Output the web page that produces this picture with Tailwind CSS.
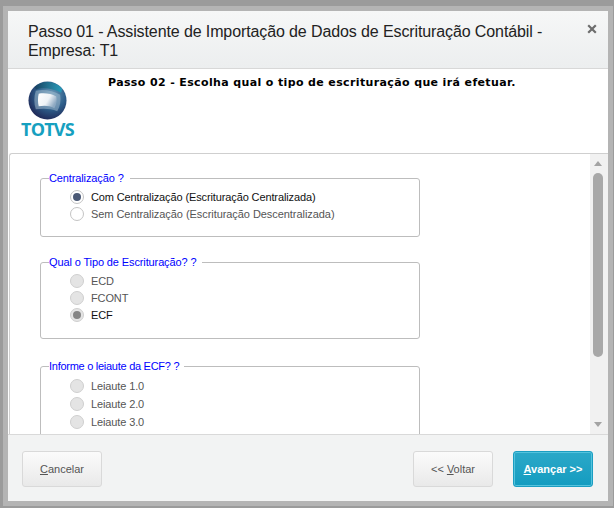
<!DOCTYPE html>
<html lang="pt">
<head>
<meta charset="utf-8">
<script src="https://cdn.jsdelivr.net/npm/@tailwindcss/browser@4"></script>
</head>
<body class="m-0">
<div class="w-[614px] h-[508px] overflow-hidden bg-[#9b9b9b] pl-[3px] pr-px pt-[6px] pb-[2px] font-['Liberation_Sans',Arial,sans-serif]">
  <div class="h-full border-[5px] border-[#b4b4b4] flex flex-col bg-white">
    <!-- header -->
    <header class="h-[58px] shrink-0 flex items-start bg-gradient-to-b from-[#f6f7f7] to-[#eceeef] border-b border-[#d8d8d8] pl-5 pr-[10px] pt-[11px]">
      <h1 class="flex-1 text-[16px] leading-[19px] tracking-[-0.11px] text-[#222]">Passo 01 - Assistente de Importação de Dados de Escrituração Contábil - Empresa: T1</h1>
      <span class="w-[12px] h-[12px] mt-px">
        <svg viewBox="0 0 12 12" class="w-[12px] h-[12px]"><path d="M2.2 2.2 L9.8 9.8 M9.8 2.2 L2.2 9.8" stroke="#6d6d6d" stroke-width="2.2" fill="none"/></svg>
      </span>
    </header>
    <!-- step banner -->
    <div class="h-[84px] shrink-0 flex bg-white">
      <div class="w-[100px] shrink-0 flex flex-col items-center pt-[12px] pr-[21px]">
        <svg viewBox="0 0 40 40" class="w-[39px] h-[39px]">
          <defs>
            <radialGradient id="ball" cx="0.6" cy="0.35" r="0.75">
              <stop offset="0" stop-color="#6f9ebb"/>
              <stop offset="0.5" stop-color="#2e5f8b"/>
              <stop offset="1" stop-color="#1c1c4c"/>
            </radialGradient>
            <linearGradient id="ball-top" x1="0" y1="0" x2="1" y2="0">
              <stop offset="0" stop-color="#153f5c"/>
              <stop offset="1" stop-color="#23a3c0"/>
            </linearGradient>
            <linearGradient id="pane" x1="0" y1="0" x2="1" y2="0.5">
              <stop offset="0" stop-color="#ffffff"/>
              <stop offset="0.6" stop-color="#eef2f6"/>
              <stop offset="1" stop-color="#8ea9c2"/>
            </linearGradient>
          </defs>
          <circle cx="20" cy="20" r="19.5" fill="url(#ball)"/>
          <path d="M7 6 C14 -1 28 -1 35 8 L34 12 C26 8 15 6 8 9 Z" fill="url(#ball-top)" opacity="0.85"/>
          <path d="M8 10 C16 8 26 10 33 14 C34 20 33 26 30 31 C23 28 15 28 8 29 C6 23 6 16 8 10 Z" fill="#a9bfd2" opacity="0.5"/>
          <path d="M11 13 C17 12 24 13 29 16 C30 20 29 24 27 28 C22 25 16 25 11 26 C10 22 10 17 11 13 Z" fill="url(#pane)"/>
        </svg>
        <span class="text-[18px] leading-[18px] font-bold text-[#16a0c0] tracking-[-0.8px] font-['Open_Sans','Liberation_Sans',sans-serif]">TOTVS</span>
      </div>
      <p class="pt-[7px] text-[11px] leading-[14px] font-bold tracking-[0.37px] text-black font-['DejaVu_Sans',Verdana,sans-serif]">Passo 02 - Escolha qual o tipo de escrituração que irá efetuar.</p>
    </div>
    <!-- scroll area -->
    <div class="h-[281px] shrink-0 ml-px flex border-t border-l border-[#cfcfcf] rounded-tl-[3px] overflow-hidden bg-white">
      <div class="flex-1 overflow-hidden pl-[30px] pt-[18px] text-[11px] tracking-[-0.12px] text-[#333]">
        <fieldset class="w-[380px] h-[65px] border border-[#bdbdbd] rounded-[3px] mb-[19px]">
          <legend class="ml-[8px] pr-[6px] text-[11px] leading-[13px] text-[#0000ff]">Centralização ?</legend>
          <div class="flex flex-col gap-[3px] mt-[5px] pl-[29px]">
            <label class="h-[14px] flex items-center gap-[7px] text-[#111]"><span class="w-[14px] h-[14px] rounded-full border border-[#c4c4c4] bg-white flex items-center justify-center"><span class="w-[8px] h-[8px] rounded-full bg-[#4a5874]"></span></span>Com Centralização (Escrituração Centralizada)</label>
            <label class="h-[14px] flex items-center gap-[7px] tracking-[-0.06px] text-[#555]"><span class="w-[14px] h-[14px] rounded-full border border-[#c4c4c4] bg-white"></span>Sem Centralização (Escrituração Descentralizada)</label>
          </div>
        </fieldset>
        <fieldset class="w-[380px] h-[83px] border border-[#bdbdbd] rounded-[3px] mb-[21px]">
          <legend class="ml-[8px] pr-[6px] text-[11px] leading-[13px] text-[#0000ff]">Qual o Tipo de Escrituração? ?</legend>
          <div class="flex flex-col gap-[3px] mt-[5px] pl-[29px]">
            <label class="h-[14px] flex items-center gap-[7px] text-[#555]"><span class="w-[14px] h-[14px] rounded-full border border-[#cfcfcf] bg-[#e4e4e4]"></span>ECD</label>
            <label class="h-[14px] flex items-center gap-[7px] text-[#555]"><span class="w-[14px] h-[14px] rounded-full border border-[#cfcfcf] bg-[#e4e4e4]"></span>FCONT</label>
            <label class="h-[14px] flex items-center gap-[7px] text-[#111]"><span class="w-[14px] h-[14px] rounded-full border border-[#cfcfcf] bg-[#e4e4e4] flex items-center justify-center"><span class="w-[8px] h-[8px] rounded-full bg-[#858585]"></span></span>ECF</label>
          </div>
        </fieldset>
        <fieldset class="w-[380px] h-[90px] border border-[#bdbdbd] rounded-[3px]">
          <legend class="ml-[8px] pr-[5px] text-[11px] leading-[13px] tracking-[-0.27px] text-[#0000ff]">Informe o leiaute da ECF? ?</legend>
          <div class="flex flex-col gap-[4px] mt-[6px] pl-[29px]">
            <label class="h-[14px] flex items-center gap-[7px] text-[#555]"><span class="w-[14px] h-[14px] rounded-full border border-[#cfcfcf] bg-[#e4e4e4]"></span>Leiaute 1.0</label>
            <label class="h-[14px] flex items-center gap-[7px] text-[#555]"><span class="w-[14px] h-[14px] rounded-full border border-[#cfcfcf] bg-[#e4e4e4]"></span>Leiaute 2.0</label>
            <label class="h-[14px] flex items-center gap-[7px] text-[#555]"><span class="w-[14px] h-[14px] rounded-full border border-[#cfcfcf] bg-[#e4e4e4]"></span>Leiaute 3.0</label>
          </div>
        </fieldset>
      </div>
      <!-- scrollbar -->
      <div class="w-[18px] shrink-0 bg-[#f1f1f1] flex flex-col items-center pt-[7px] pr-[2px]">
        <svg viewBox="0 0 8 5" class="w-[8px] h-[5px]"><path d="M4 0 L8 5 L0 5 Z" fill="#a3a3a3"/></svg>
        <div class="w-[10px] h-[184px] mt-[7px] rounded-[5px] bg-[#a8a8a8]"></div>
        <svg viewBox="0 0 8 5" class="w-[8px] h-[5px] mt-auto mb-[7px]"><path d="M0 0 L8 0 L4 5 Z" fill="#a3a3a3"/></svg>
      </div>
    </div>
    <!-- footer -->
    <footer class="flex-1 flex items-start bg-[#f2f3f3] border-t border-[#d9d9d9] pl-[14px] pr-[15px] pt-[16px] text-[11px]">
      <button class="w-[80px] h-[36px] rounded-[3px] border border-[#d9d9d9] bg-gradient-to-b from-[#fbfbfb] to-[#e9e9e9] text-[#555]"><u>C</u>ancelar</button>
      <button class="w-[80px] h-[36px] ml-auto rounded-[3px] border border-[#d9d9d9] bg-gradient-to-b from-[#fbfbfb] to-[#e9e9e9] text-[#555]">&lt;&lt; <u>V</u>oltar</button>
      <button class="w-[80px] h-[36px] ml-[20px] rounded-[3px] border border-[#1b9ec2] bg-gradient-to-b from-[#2ba8c8] to-[#129cc0] text-white font-bold shadow-[inset_0_0_0_1px_#55c3dd]"><u>A</u>vançar &gt;&gt;</button>
    </footer>
  </div>
</div>
</body>
</html>
